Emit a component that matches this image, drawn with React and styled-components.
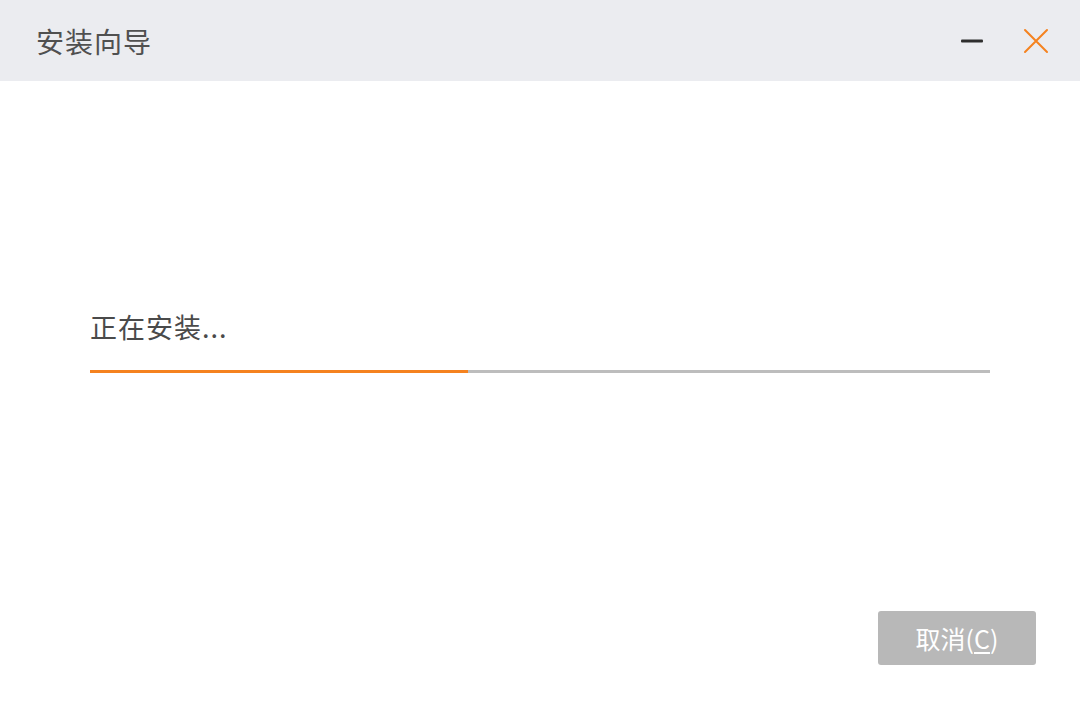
import React from "react";
import styled, { createGlobalStyle } from "styled-components";

const Global = createGlobalStyle`
  html, body { margin: 0; padding: 0; background: #ffffff; }
  body { font-family: "Microsoft YaHei", "Noto Sans CJK SC", "Noto Sans", sans-serif; }
`;

const Window = styled.div`
  width: 1080px;
  height: 720px;
  display: flex;
  flex-direction: column;
  background: #ffffff;
`;

const TitleBar = styled.div`
  height: 81px;
  flex: none;
  background: #ebecf0;
  display: flex;
  align-items: center;
  padding: 0 27px 0 36px;
  box-sizing: border-box;
`;

const Title = styled.div`
  flex: 1;
  font-size: 28px;
  letter-spacing: 1px;
  color: #505050;
  line-height: 36px;
`;

const Controls = styled.div`
  display: flex;
  align-items: center;
  gap: 30px;
`;

const IconButton = styled.button`
  width: 34px;
  height: 34px;
  border: none;
  background: transparent;
  padding: 0;
  display: flex;
  align-items: center;
  justify-content: center;
  cursor: pointer;
`;

const Body = styled.div`
  flex: 1;
  display: flex;
  flex-direction: column;
  padding: 228px 90px 0 90px;
`;

const Status = styled.div`
  font-size: 27px;
  letter-spacing: 1px;
  color: #4a4a4a;
  line-height: 36px;
`;

const Track = styled.div`
  margin-top: 25px;
  height: 3px;
  background: #bdbdbd;
  width: 900px;
  display: flex;
`;

const Fill = styled.div`
  height: 100%;
  background: #f5821f;
`;

const Footer = styled.div`
  display: flex;
  justify-content: flex-end;
  padding: 0 44px 55px 0;
`;

const CancelButton = styled.button`
  width: 158px;
  height: 54px;
  border: none;
  border-radius: 3px;
  background: #b8b8b8;
  color: #ffffff;
  font-family: inherit;
  font-size: 25px;
  display: flex;
  align-items: center;
  justify-content: center;
  cursor: default;
`;

const Underline = styled.span`
  text-decoration: underline;
  text-underline-offset: 3px;
`;

export default function App() {
  const progress = 0.42;
  return (
    <>
      <Global />
      <Window>
        <TitleBar>
          <Title>安装向导</Title>
          <Controls>
            <IconButton aria-label="minimize">
              <svg width="22" height="6" viewBox="0 0 22 6">
                <rect x="0" y="1.5" width="22" height="3" rx="1" fill="#2e2e2e" />
              </svg>
            </IconButton>
            <IconButton aria-label="close">
              <svg width="26" height="26" viewBox="0 0 26 26">
                <path d="M2 2 L24 24 M24 2 L2 24" stroke="#f5821f" strokeWidth="2" strokeLinecap="round" />
              </svg>
            </IconButton>
          </Controls>
        </TitleBar>
        <Body>
          <Status>正在安装...</Status>
          <Track>
            <Fill style={{ width: `${progress * 100}%` }} />
          </Track>
        </Body>
        <Footer>
          <CancelButton>
            取消(<Underline>C</Underline>)
          </CancelButton>
        </Footer>
      </Window>
    </>
  );
}
